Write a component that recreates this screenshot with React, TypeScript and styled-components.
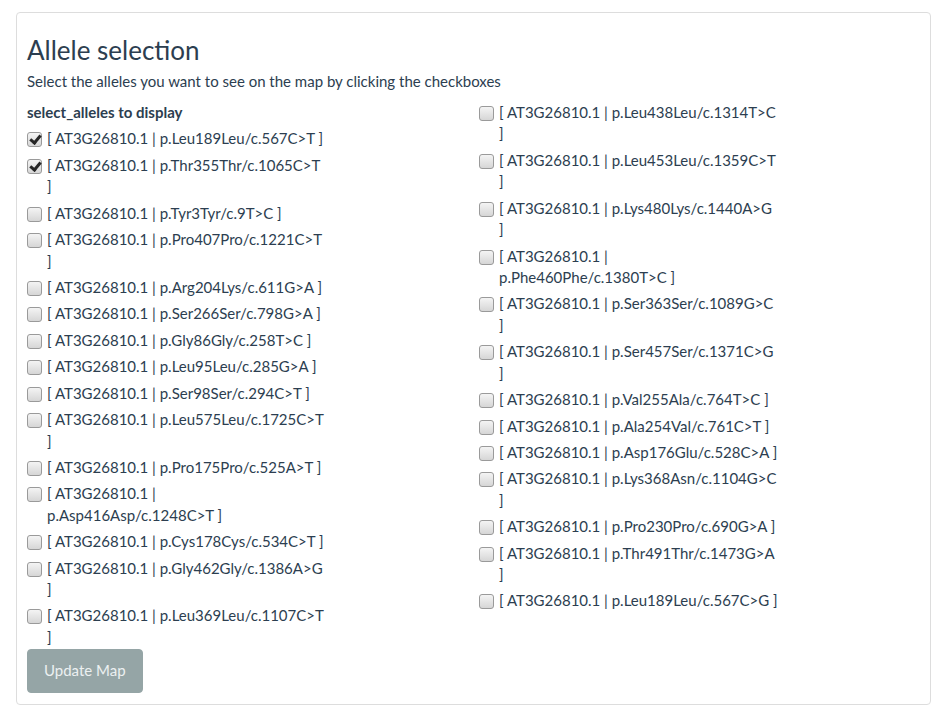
import React from "react";
import styled, { createGlobalStyle } from "styled-components";

const GlobalStyle = createGlobalStyle`
  body {
    margin: 0;
    background: #ffffff;
    font-family: Lato, "Open Sans", sans-serif;
    font-size: 15px;
    line-height: 1.42857;
    color: #2c3e50;
  }
`;

interface Allele {
  label: string;
  checked?: boolean;
}

const leftAlleles: Allele[] = [
  { label: "[ AT3G26810.1 | p.Leu189Leu/c.567C>T ]", checked: true },
  { label: "[ AT3G26810.1 | p.Thr355Thr/c.1065C>T ]", checked: true },
  { label: "[ AT3G26810.1 | p.Tyr3Tyr/c.9T>C ]" },
  { label: "[ AT3G26810.1 | p.Pro407Pro/c.1221C>T ]" },
  { label: "[ AT3G26810.1 | p.Arg204Lys/c.611G>A ]" },
  { label: "[ AT3G26810.1 | p.Ser266Ser/c.798G>A ]" },
  { label: "[ AT3G26810.1 | p.Gly86Gly/c.258T>C ]" },
  { label: "[ AT3G26810.1 | p.Leu95Leu/c.285G>A ]" },
  { label: "[ AT3G26810.1 | p.Ser98Ser/c.294C>T ]" },
  { label: "[ AT3G26810.1 | p.Leu575Leu/c.1725C>T ]" },
  { label: "[ AT3G26810.1 | p.Pro175Pro/c.525A>T ]" },
  { label: "[ AT3G26810.1 | p.Asp416Asp/c.1248C>T ]" },
  { label: "[ AT3G26810.1 | p.Cys178Cys/c.534C>T ]" },
  { label: "[ AT3G26810.1 | p.Gly462Gly/c.1386A>G ]" },
  { label: "[ AT3G26810.1 | p.Leu369Leu/c.1107C>T ]" },
];

const rightAlleles: Allele[] = [
  { label: "[ AT3G26810.1 | p.Leu438Leu/c.1314T>C ]" },
  { label: "[ AT3G26810.1 | p.Leu453Leu/c.1359C>T ]" },
  { label: "[ AT3G26810.1 | p.Lys480Lys/c.1440A>G ]" },
  { label: "[ AT3G26810.1 | p.Phe460Phe/c.1380T>C ]" },
  { label: "[ AT3G26810.1 | p.Ser363Ser/c.1089G>C ]" },
  { label: "[ AT3G26810.1 | p.Ser457Ser/c.1371C>G ]" },
  { label: "[ AT3G26810.1 | p.Val255Ala/c.764T>C ]" },
  { label: "[ AT3G26810.1 | p.Ala254Val/c.761C>T ]" },
  { label: "[ AT3G26810.1 | p.Asp176Glu/c.528C>A ]" },
  { label: "[ AT3G26810.1 | p.Lys368Asn/c.1104G>C ]" },
  { label: "[ AT3G26810.1 | p.Pro230Pro/c.690G>A ]" },
  { label: "[ AT3G26810.1 | p.Thr491Thr/c.1473G>A ]" },
  { label: "[ AT3G26810.1 | p.Leu189Leu/c.567C>G ]" },
];

const Panel = styled.section`
  margin: 12px 16px 11px;
  padding: 0 10px 11px;
  border: 1px solid #dddddd;
  border-radius: 4px;
  background: #ffffff;
`;

const Title = styled.h3`
  margin: 23px 0 6px;
  font-size: 26px;
  font-weight: 400;
  line-height: 1.1;
`;

const Help = styled.p`
  margin: 0 0 10px;
`;

const Columns = styled.div`
  display: grid;
  grid-template-columns: 452px 1fr;
`;

const Column = styled.div`
  display: flex;
  flex-direction: column;
  gap: 5px;
`;

const GroupLabel = styled.div`
  font-weight: 700;
`;

const Option = styled.label<{ $textWidth: number }>`
  display: block;
  position: relative;
  width: ${(p) => p.$textWidth}px;
  padding-left: 20px;
  cursor: pointer;
`;

const Box = styled.input.attrs({ type: "checkbox" })`
  appearance: none;
  position: absolute;
  left: 0;
  top: 4px;
  width: 15px;
  height: 15px;
  margin: 0;
  box-sizing: border-box;
  border: 1px solid #9a9a9a;
  border-radius: 3px;
  background: linear-gradient(#f4f4f4, #d6d6d6);

  &:checked::after {
    content: "";
    position: absolute;
    left: 4px;
    top: 0px;
    width: 4px;
    height: 8px;
    border: solid #262626;
    border-width: 0 3px 3px 0;
    transform: rotate(40deg);
  }
`;

const UpdateButton = styled.button`
  margin-top: 1px;
  padding: 10px 16px;
  border: 1px solid #95a5a6;
  border-radius: 4px;
  background: #95a5a6;
  color: #ecf0f1;
  font-family: inherit;
  font-size: 15px;
  line-height: 1.42857;
  cursor: pointer;
`;

const AlleleOption: React.FC<{ allele: Allele; textWidth: number }> = ({
  allele,
  textWidth,
}) => (
  <Option $textWidth={textWidth}>
    <Box defaultChecked={allele.checked} />
    <span>{allele.label}</span>
  </Option>
);

export default function App() {
  return (
    <>
      <GlobalStyle />
      <Panel>
        <Title>Allele selection</Title>
        <Help>
          Select the alleles you want to see on the map by clicking the
          checkboxes
        </Help>
        <Columns>
          <Column>
            <GroupLabel>select_alleles to display</GroupLabel>
            {leftAlleles.map((a) => (
              <AlleleOption key={a.label} allele={a} textWidth={278.5} />
            ))}
          </Column>
          <Column>
            {rightAlleles.map((a) => (
              <AlleleOption key={a.label} allele={a} textWidth={280} />
            ))}
          </Column>
        </Columns>
        <UpdateButton>Update Map</UpdateButton>
      </Panel>
    </>
  );
}
